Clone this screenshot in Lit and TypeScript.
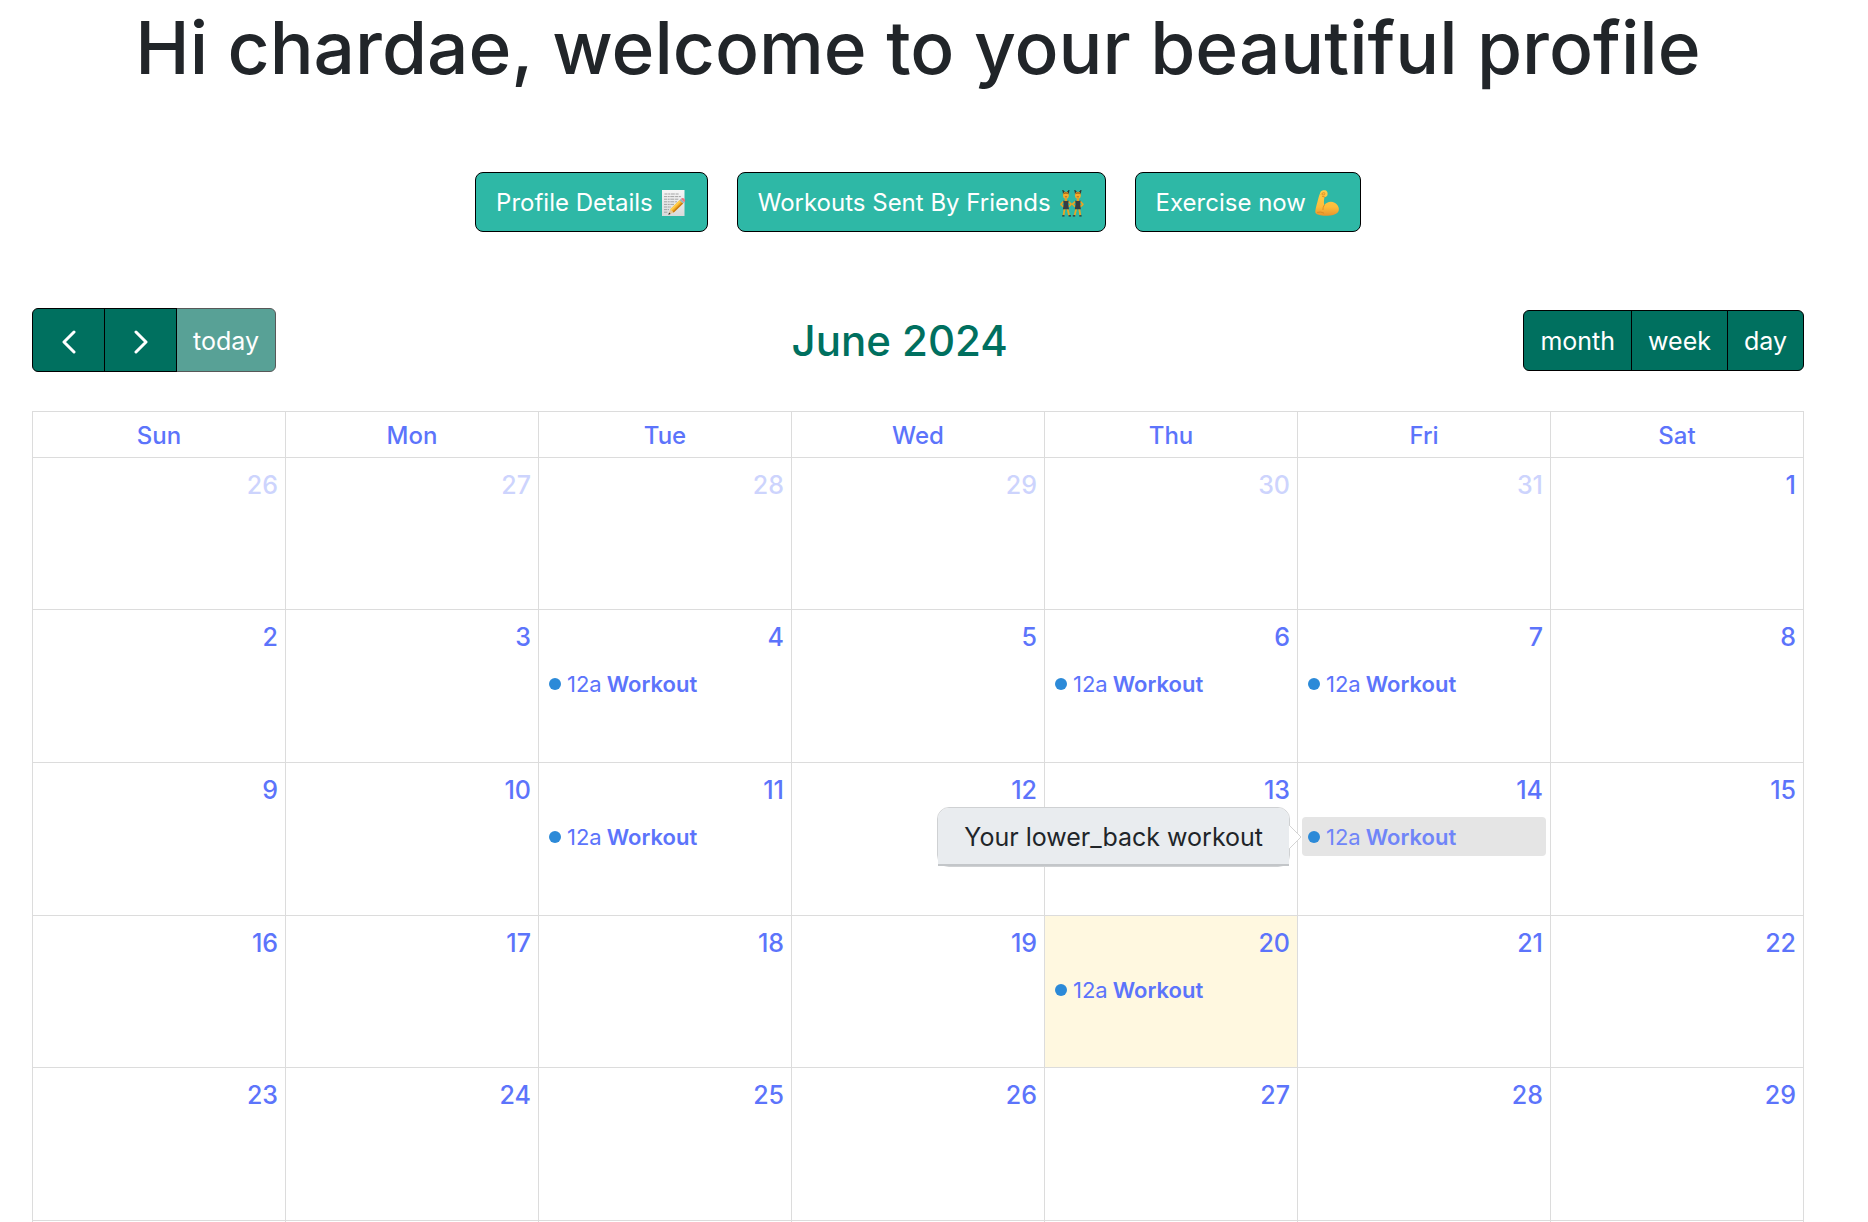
import { LitElement, html, css, svg } from "lit";
import { customElement, property } from "lit/decorators.js";
import { classMap } from "lit/directives/class-map.js";

const DAY_NAMES = ["Sun", "Mon", "Tue", "Wed", "Thu", "Fri", "Sat"];

interface Day {
  date: number;
  other?: boolean;
  today?: boolean;
  workout?: boolean;
  note?: string;
}

const WORKOUT_DAYS = [4, 6, 7, 11, 14, 20];
const TODAY = 20;
const NOTES: Record<number, string> = { 14: "Your lower_back workout" };

function buildWeeks(): Day[][] {
  const days: Day[] = [26, 27, 28, 29, 30, 31].map((date) => ({ date, other: true }));
  for (let date = 1; date <= 29; date++) {
    days.push({
      date,
      today: date === TODAY,
      workout: WORKOUT_DAYS.includes(date),
      note: NOTES[date],
    });
  }
  const weeks: Day[][] = [];
  for (let i = 0; i < days.length; i += 7) weeks.push(days.slice(i, i + 7));
  return weeks;
}

const memoIcon = html`<svg class="emoji" viewBox="0 0 26 28" aria-hidden="true">
  <defs>
    <linearGradient id="paper" x1="0" y1="0" x2="0" y2="1">
      <stop offset="0" stop-color="#f6f6f6" /><stop offset="1" stop-color="#d9dadb" />
    </linearGradient>
  </defs>
  <rect x="1" y="1" width="22.5" height="26" fill="url(#paper)" />
  <g stroke="#9b9b9b" stroke-width=".9" stroke-dasharray="3 .7 2 .6 4 .8">
    <path d="M3.5 5H18" /><path d="M3 7.6H20" /><path d="M3 10.2H18" /><path d="M3 12.8H16" />
    <path d="M3 15.4H13" /><path d="M3 18H10" /><path d="M3 20.6H8" /><path d="M3 23.2H7" />
  </g>
  <path d="M7.3 25.8 9.3 20.2 12.7 23.6Z" fill="#e8c797" />
  <path d="M7.3 25.8 8.1 23.5 9.6 25Z" fill="#2d2d2d" />
  <path d="M9.3 20.2 18.6 11.2 22.1 14.6 12.7 23.6Z" fill="#f5ae26" />
  <path d="M9.3 20.2 18.6 11.2 19.8 12.4 10.5 21.4Z" fill="#ffcf4f" />
  <path d="M11.6 22.5 21 13.5 22.1 14.6 12.7 23.6Z" fill="#c97c13" />
  <path d="M18.6 11.2 20 9.8 23.4 13.2 22.1 14.6Z" fill="#9fb0b8" />
  <path d="M20 9.8Q21.7 8.4 23.5 9.9 24.8 11.8 23.4 13.2Z" fill="#ee7480" />
</svg>`;

const dancer = (shift: number, flip: boolean) => svg`
  <g transform=${flip ? `translate(${shift} 0) scale(-1 1)` : `translate(${shift} 0)`}>
    <path d="M3.9 5 3.2 1.2 5.4 3.6M8.7 5 9.4 1.2 7.2 3.6" fill="#30302f" stroke="#30302f" stroke-width=".8" />
    <path d="M4 12.4 1.3 15.3 4.3 18.2M8.6 12.4 11.6 15.2 9.1 17.8" fill="none" stroke="#eda421" stroke-width="1.6" stroke-linejoin="round" />
    <path d="M5 19.5 4 26M7.9 19.5 9.5 26.2" stroke="#eda421" stroke-width="1.8" />
    <path d="M4.9 26.8H2.6M9 26.8H11.4" stroke="#30302f" stroke-width="1.3" />
    <ellipse cx="6.3" cy="6.2" rx="2.9" ry="3.5" fill="#f5ad2c" />
    <path d="M3.4 5.5Q6.3 1.2 9.2 5.5 6.3 3.6 3.4 5.5Z" fill="#8c5418" />
    <path d="M5.3 7.8H7.5" stroke="#94471c" stroke-width=".7" />
    <path d="M5.1 9.6H7.5V12H5.1Z" fill="#e79b21" />
    <path d="M3.6 11.4 5.2 11.9H7.4L9 11.4 8.6 15.2 9.4 20.2H3.3L4.1 15.2Z" fill="#363c43" />
  </g>`;

const dancersIcon = html`<svg class="emoji" viewBox="0 0 26 28" aria-hidden="true">
  ${dancer(0.6, false)}${dancer(25.2, true)}
</svg>`;

const bicepsIcon = html`<svg class="emoji" viewBox="0 0 26 28" aria-hidden="true">
  <defs>
    <linearGradient id="skin" x1="0" y1="0" x2="0" y2="1">
      <stop offset="0" stop-color="#ffce4b" /><stop offset=".65" stop-color="#fdbd3b" /><stop offset="1" stop-color="#e9942c" />
    </linearGradient>
  </defs>
  <path d="M6.4 3.2C7.4 1 10.6.8 12 1.6c1.6.9 1.9 3 1.4 4.7-.4 1.4-1.6 1.6-2.8 1.8C10 10 9.7 13 10.2 16.2c2.3-3.3 6.8-4.6 10.4-2.5 3.6 2 5 5.6 4 8.3-1.4 3.4-7.3 4.9-13.4 4.8-4.3 0-8.6-1-9.6-2.7-.7-1.4.4-6 1.6-10.3C4.2 10 5 6.4 6.4 3.2Z" fill="url(#skin)" />
  <path d="M7.3 5.2C8.4 3.4 10.4 3.3 11 4.5 11.3 5.6 10 6.3 8.6 5.7M10.6 8.1 8.3 7.2M10.2 16.2Q8.800 18.300 8.900 20.500M3.500 23.300Q7 22.300 9.700 24" fill="none" stroke="#d88722" stroke-width=".9" stroke-linecap="round" />
</svg>`;

const chevron = (d: string) => html`<svg class="chevron" viewBox="0 0 24 24" aria-hidden="true"><path d=${d} /></svg>`;

@customElement("calendar-grid")
class CalendarGrid extends LitElement {
  @property({ attribute: false }) weeks: Day[][] = [];

  static styles = css`
    :host { display: block; }
    table { width: 100%; border-collapse: collapse; table-layout: fixed; }
    th, td { border: 1px solid #dcdcdc; padding: 0; box-sizing: border-box; }
    a { color: #5c74fb; text-decoration: none; }
    th { height: 46px; padding-top: 2px; font-weight: 500; font-size: 24px; line-height: 32px; }
    td { height: 153px; vertical-align: top; }
    tr:nth-child(3n + 1) td { height: 152px; }
    .number { display: flex; justify-content: flex-end; padding: 9px 7px 0; font-size: 25px; font-weight: 500; line-height: 36px; }
    .other .number { opacity: 0.3; }
    .today { background: #fff8e0; }
    .slot { position: relative; margin: 9px 4px 0; }
    .event { display: flex; align-items: center; height: 39px; padding: 0 6px; border-radius: 4px; font-size: 22px; white-space: nowrap; }
    .event.active { background: #e5e5e5; color: #7085f8; }
    .dot { width: 12px; height: 12px; margin-right: 6px; border-radius: 50%; background: #2c8ad8; }
    .event b { margin-left: 5px; font-weight: 600; }
    .tip { position: absolute; z-index: 2; right: calc(100% + 12px); top: 50%; transform: translateY(-50%); box-sizing: border-box; border: 1px solid #cfd1d3; border-radius: 12px; background: #fff; color: #212529; font-size: 25px; line-height: 36px; white-space: nowrap; }
    .tip-text { padding: 11px 26px 9px; border-bottom: 2px solid #c3c6c9; border-radius: 11px 11px 0 0; background: #e9ecef; }
    .tip-arrow { position: absolute; left: 100%; top: 50%; width: 13px; height: 26px; transform: translateY(-50%); fill: #fff; stroke: #d4d4d4; }
  `;

  private event(day: Day) {
    return html`<div class="slot">
      <a class=${classMap({ event: true, active: !!day.note })} href="#workout-${day.date}">
        <span class="dot"></span><span>12a</span><b>Workout</b>
      </a>
      ${day.note
        ? html`<div class="tip" role="tooltip">
            <div class="tip-text">${day.note}</div>
            <svg class="tip-arrow" viewBox="0 0 13 26" aria-hidden="true"><path d="M0 1 12 13 0 25" /></svg>
          </div>`
        : null}
    </div>`;
  }

  render() {
    return html`<table>
      <thead>
        <tr>${DAY_NAMES.map((name) => html`<th scope="col"><a href="#${name}">${name}</a></th>`)}</tr>
      </thead>
      <tbody>
        ${this.weeks.map(
          (week) => html`<tr>
            ${week.map(
              (day) => html`<td class=${classMap({ other: !!day.other, today: !!day.today })}>
                <a class="number" href="#day-${day.date}">${day.date}</a>
                ${day.workout ? this.event(day) : null}
              </td>`
            )}
          </tr>`
        )}
        <tr>${DAY_NAMES.map(() => html`<td></td>`)}</tr>
      </tbody>
    </table>`;
  }
}

@customElement("app-root")
class AppRoot extends LitElement {
  static styles = css`
    :host { display: block; height: 100vh; overflow: hidden; background: #fff; font-family: Inter, "Liberation Sans", sans-serif; }
    .page { padding: 0 64px 0 32px; }
    h1 { margin: 0; text-align: center; color: #212529; font-size: 73px; font-weight: 500; line-height: 96px; white-space: nowrap; }
    nav { display: flex; justify-content: center; gap: 29px; padding: 76px 0; }
    button { font-family: inherit; font-size: 25px; line-height: 36px; color: #fff; border: 1px solid #000; margin: 0; cursor: pointer; }
    .action { display: flex; align-items: center; gap: 8px; height: 60px; padding: 2px 20px 0; border-radius: 8px; background: #2eb8a6; font-size: 24px; }
    .emoji { width: 26px; height: 28px; }
    .toolbar { display: flex; align-items: center; justify-content: space-between; height: 64px; margin-bottom: 39px; }
    .group { display: flex; }
    .group button { height: 61px; padding: 2px 16px 0; background: #00705f; }
    .group button + button { margin-left: -1px; }
    .group button:first-child { border-radius: 6px 0 0 6px; }
    .group button:last-child { border-radius: 0 6px 6px 0; }
    .nav button { display: flex; align-items: center; justify-content: center; height: 64px; }
    .nav .step { width: 73px; padding: 4px 0 0; }
    .nav button:disabled { opacity: 0.65; }
    .chevron { width: 24px; height: 24px; fill: none; stroke: #fff; stroke-width: 3; stroke-linecap: round; stroke-linejoin: round; }
    h2 { margin: 0; padding-top: 2px; color: #00705f; font-size: 42px; font-weight: 500; line-height: 52px; }
  `;

  render() {
    return html`<main class="page">
      <h1>Hi chardae, welcome to your beautiful profile</h1>
      <nav>
        <button class="action">Profile Details ${memoIcon}</button>
        <button class="action">Workouts Sent By Friends ${dancersIcon}</button>
        <button class="action">Exercise now ${bicepsIcon}</button>
      </nav>
      <div class="toolbar">
        <div class="group nav">
          <button class="step" aria-label="Previous month">${chevron("M17 2 7 12 17 22")}</button>
          <button class="step" aria-label="Next month">${chevron("M7 2 17 12 7 22")}</button>
          <button disabled>today</button>
        </div>
        <h2>June 2024</h2>
        <div class="group">
          <button>month</button><button>week</button><button>day</button>
        </div>
      </div>
      <calendar-grid .weeks=${buildWeeks()}></calendar-grid>
    </main>`;
  }
}
